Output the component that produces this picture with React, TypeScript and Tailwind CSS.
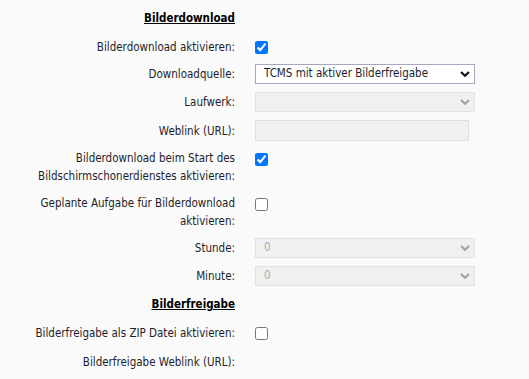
import type { ReactNode } from 'react';

function Chevron({ disabled }: { disabled?: boolean }) {
  return (
    <svg
      width="10"
      height="6"
      viewBox="0 0 10 6"
      className="pointer-events-none absolute right-[5px] top-1/2 -translate-y-1/2"
    >
      <path
        d="M1 1L5 4.8L9 1"
        fill="none"
        stroke={disabled ? '#a3a3a3' : '#111'}
        strokeWidth="2.2"
      />
    </svg>
  );
}

function Select({ value, disabled }: { value: string; disabled?: boolean }) {
  return (
    <div className="relative w-[220px] h-5">
      <select
        disabled={disabled}
        defaultValue={value}
        className={
          disabled
            ? 'appearance-none w-full h-5 pl-2 pr-5 border border-[#e2e2e2] bg-[#f0f0f0] text-[#a9a9a9] outline-none'
            : 'appearance-none w-full h-5 pl-2 pr-5 border border-[#a7a7c0] bg-white text-[#1b1b2b] outline-none'
        }
      >
        <option value={value}>{value}</option>
      </select>
      <Chevron disabled={disabled} />
    </div>
  );
}

function Check({ checked }: { checked?: boolean }) {
  return (
    <input
      type="checkbox"
      defaultChecked={checked}
      className="m-0 w-[13px] h-[13px] block"
    />
  );
}

function Row({
  label,
  children,
  className = '',
}: {
  label: ReactNode;
  children?: ReactNode;
  className?: string;
}) {
  return (
    <div className={'flex ' + className}>
      <div className="w-[206px] ml-[29px] shrink-0 text-right leading-[18px]">{label}</div>
      <div className="ml-5 flex-1">{children}</div>
    </div>
  );
}

function Heading({ children, className = '' }: { children: ReactNode; className?: string }) {
  return (
    <div className={'flex ' + className}>
      <div className="w-[206px] ml-[29px] text-right leading-[18px] font-bold underline text-black">
        {children}
      </div>
    </div>
  );
}

export default function App() {
  return (
    <div className="min-h-screen bg-[#fafafa] pt-[9px] text-[11.5px] text-[#1e1e2a] font-['DejaVu_Sans_Condensed','DejaVu_Sans',sans-serif]">
      {/* Bilderdownload */}
      <Heading>Bilderdownload</Heading>

      <Row label="Bilderdownload aktivieren:" className="mt-[11px]">
        <div className="pt-[3px]">
          <Check checked />
        </div>
      </Row>

      <Row label="Downloadquelle:" className="mt-2 items-center">
        <Select value="TCMS mit aktiver Bilderfreigabe" />
      </Row>

      <Row label="Laufwerk:" className="mt-2 items-center">
        <Select value="" disabled />
      </Row>

      <Row label="Weblink (URL):" className="mt-2 items-center">
        <input
          type="text"
          disabled
          className="block w-[214px] h-[21px] border border-[#dedede] bg-[#f0f0f0] outline-none"
        />
      </Row>

      <Row
        label={
          <>
            Bilderdownload beim Start des
            <br />
            Bildschirmschonerdienstes aktivieren:
          </>
        }
        className="mt-2"
      >
        <div className="pt-[4px]">
          <Check checked />
        </div>
      </Row>

      <Row
        label={
          <>
            Geplante Aufgabe für Bilderdownload
            <br />
            aktivieren:
          </>
        }
        className="mt-[9px]"
      >
        <div className="pt-[4px]">
          <Check />
        </div>
      </Row>

      <Row label="Stunde:" className="mt-2 items-center">
        <Select value="0" disabled />
      </Row>

      <Row label="Minute:" className="mt-2 items-center">
        <Select value="0" disabled />
      </Row>

      {/* Bilderfreigabe */}
      <Heading className="mt-[9px]">Bilderfreigabe</Heading>

      <Row label="Bilderfreigabe als ZIP Datei aktivieren:" className="mt-[11px]">
        <div className="pt-[3px]">
          <Check />
        </div>
      </Row>

      <Row label="Bilderfreigabe Weblink (URL):" className="mt-[11px]" />
    </div>
  );
}
